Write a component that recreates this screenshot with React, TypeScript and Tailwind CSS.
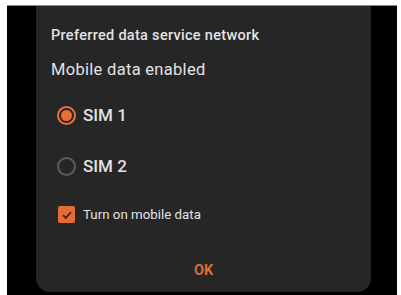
const font = { fontFamily: 'Roboto, "Liberation Sans", sans-serif' };

const Radio = ({ checked }: { checked: boolean }) =>
    checked ? (
        <span className="w-[19px] h-[19px] rounded-full border-2 border-[#e9703c] flex items-center justify-center">
            <span className="w-[11px] h-[11px] rounded-full bg-[#ea6e36]" />
        </span>
    ) : (
        <span className="w-[19px] h-[19px] rounded-full border-2 border-[#5c5c5c]" />
    );

const App = () => {
    return (
        <div className="w-[401px] h-[295px] bg-white pl-[7px] pr-[4px] pt-[5px] overflow-hidden" style={font}>
            <div className="h-full bg-black border-t border-[#8a8a8a] pl-[29px]">
                <div className="w-[335px] h-[286px] bg-[#262626] rounded-b-[14px] flex flex-col pl-[15px] pt-[21px] text-[#e2e2e2]">
                    <p className="text-[14.5px] leading-[17px] font-medium tracking-[0.3px]">
                        Preferred data service network
                    </p>
                    <p className="text-[16.5px] leading-[20px] mt-[16px] tracking-[0.3px]">Mobile data enabled</p>

                    <div className="flex items-center mt-[23px] ml-[6px] gap-[7px]">
                        <Radio checked />
                        <span className="text-[17px] font-medium">SIM 1</span>
                    </div>
                    <div className="flex items-center mt-[25px] ml-[6px] gap-[7px]">
                        <Radio checked={false} />
                        <span className="text-[17px] font-medium">SIM 2</span>
                    </div>

                    <div className="flex items-center mt-[26px] ml-[7px] gap-[8px]">
                        <span className="w-[17px] h-[17px] rounded-[2px] bg-[#e46b34] flex items-center justify-center">
                            <svg width="12" height="12" viewBox="0 0 12 12" fill="none">
                                <path d="M2 6.2 L4.8 9 L10 3" stroke="#3a2418" strokeWidth="1.8" />
                            </svg>
                        </span>
                        <span className="text-[13.3px]">Turn on mobile data</span>
                    </div>

                    <div className="flex justify-center mt-[35px] pr-[15px]">
                        <span className="text-[14.5px] font-bold text-[#de6a36]">OK</span>
                    </div>
                </div>
            </div>
        </div>
    );
};

export default App;
